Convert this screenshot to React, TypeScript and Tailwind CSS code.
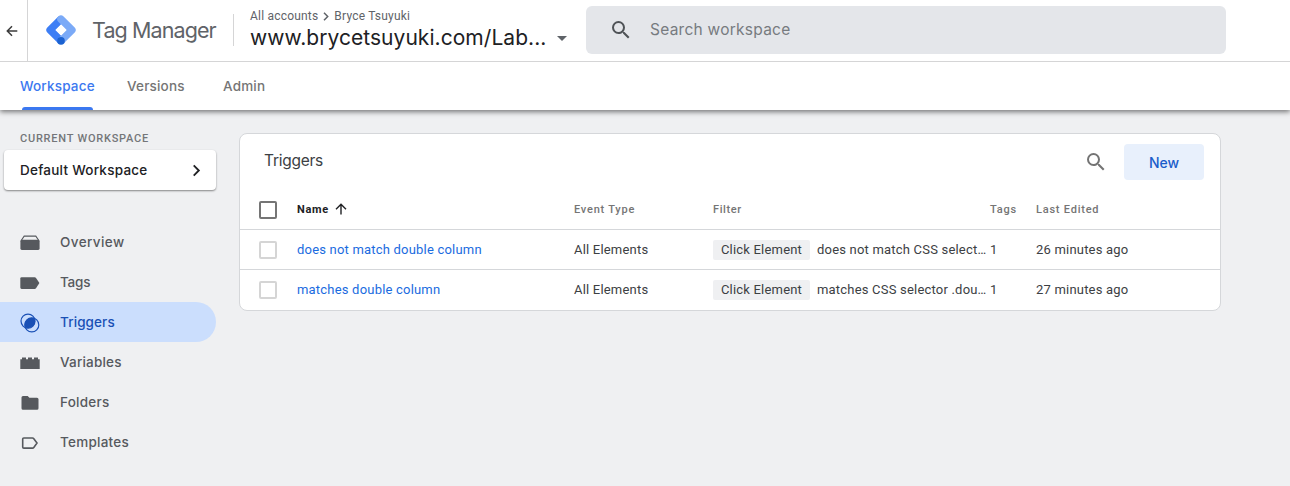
import React from "react";

const SearchIcon = ({ className }: { className: string }) => (
  <svg viewBox="0 0 24 24" className={className} fill="currentColor">
    <path d="M15.5 14h-.79l-.28-.27A6.471 6.471 0 0 0 16 9.5 6.5 6.5 0 1 0 9.5 16c1.61 0 3.09-.59 4.23-1.57l.27.28v.79l5 4.99L20.49 19l-4.99-5zm-6 0C7.01 14 5 11.99 5 9.5S7.01 5 9.5 5 14 7.01 14 9.5 11.99 14 9.5 14z" />
  </svg>
);

const Logo = () => (
  <svg viewBox="0 0 30 30" className="mb-px size-[30px] shrink-0">
    <path d="M12.6 1.3 L1.3 12.6 Q-1 15 1.3 17.4 L12.4 28.5 L17.6 23 L9.5 15 L17.7 6.8Z" fill="#3d7ef5" />
    <path d="M12.3 1.5 Q15 -1 17.6 1.5 L28.7 12.6 Q31 15 28.7 17.4 L17.6 28.4 L12.3 23.2 L20.5 15 L12.3 6.8 Q9.7 4.1 12.3 1.5Z" fill="#7baaf7" />
    <path d="M15 9.5 L20.5 15 L15 20.5 L9.5 15Z" fill="#fff" />
    <circle cx="15" cy="25.9" r="3.8" fill="#1b62d1" />
  </svg>
);

const icons: Record<string, React.ReactNode> = {
  Overview: (
    <>
      <path d="M1.2 8.5 4.2 4.1h11.6l3 4.4" fill="none" stroke="currentColor" strokeWidth="1.1" />
      <rect x="0.4" y="7.8" width="19.2" height="10.2" rx="1.4" />
    </>
  ),
  Tags: <path d="M1.6 5.3h13.1q.8 0 1.3.6L19.4 11.1 16 16.2q-.5.7-1.3.7H1.6q-1.3 0-1.3-1.3V6.6q0-1.3 1.3-1.3Z" />,
  Triggers: (
    <>
      <circle cx="8" cy="9.1" r="7" fill="none" stroke="currentColor" strokeWidth="1.2" />
      <circle cx="11.8" cy="12.9" r="7" fill="none" stroke="currentColor" strokeWidth="1.2" />
      <path d="M14.5 6.4A7 7 0 0 0 5.3 15.6 7 7 0 0 0 14.5 6.4Z" />
    </>
  ),
  Variables: <path d="M.3 7.2H2V5.4h4v1.8h2V5.4h4v1.8h2V5.4h4v1.8h1.7v9.9H.3Z" />,
  Folders: <path d="M3 4h4.7l1.7 1.8H17q1.5 0 1.5 1.5v9q0 1.5-1.5 1.5H3q-1.5 0-1.5-1.5V5.5Q1.5 4 3 4Z" />,
  Templates: (
    <path d="M3.8 6h8.7q.8 0 1.3.7l3.2 4.4-3.2 4.3q-.5.7-1.3.7H3.8q-1.1 0-1.1-1.1V7.1Q2.7 6 3.8 6Z" fill="none" stroke="currentColor" strokeWidth="1.6" />
  ),
};

const menu = [
  { name: "Overview", track: "tracking-[0.4px]" },
  { name: "Tags", track: "tracking-[-0.2px]" },
  { name: "Triggers", track: "tracking-[0.1px]" },
  { name: "Variables", track: "tracking-[0.2px]" },
  { name: "Folders", track: "tracking-[0.25px]" },
  { name: "Templates", track: "tracking-[0.25px]" },
];

const rows = [
  { name: "does not match double column", filter: "does not match CSS select…", edited: "26 minutes ago" },
  { name: "matches double column", filter: "matches CSS selector .dou…", edited: "27 minutes ago" },
];

const columns = "grid grid-cols-[57px_277px_139px_277px_46px_1fr] items-center";

export default function App() {
  return (
    <div className="flex h-[486px] w-[1290px] flex-col overflow-hidden bg-[#eff0f2] font-[Roboto,sans-serif] text-[#3c4043]">
      <header className="relative z-10 shrink-0 bg-white shadow-[0_2px_5px_rgba(0,0,0,0.5)]">
        <div className="flex h-[62px] border-b border-[#d5d5d6]">
          <div className="flex w-7 items-center border-r border-[#d5d5d6] pl-[6px]">
            <svg viewBox="0 0 12 12" className="size-3" fill="none" stroke="#3c3c3c" strokeWidth="1.5">
              <path d="M11.3 6H1.6M6 1.3 1.3 6 6 10.7" />
            </svg>
          </div>
          <div className="flex w-[206px] items-center pl-[18px]">
            <Logo />
            <span className="ml-[16px] whitespace-nowrap font-[Inter,sans-serif] text-[21.5px] tracking-[-0.9px] text-[#5f6368]">Tag Manager</span>
          </div>
          <div className="mt-[14px] h-8 w-px shrink-0 -translate-x-px bg-[#d5d5d6]" />
          <div className="w-[351px] pl-[15px] pt-[9px]">
            <div className="flex h-[14px] items-center text-[12px] tracking-[0.2px] text-[#5f6368]">
              All accounts
              <svg viewBox="0 0 6 9" className="mx-[5px] h-[9px] w-[6px]" fill="none" stroke="#5f6368" strokeWidth="1.5">
                <path d="m1 .8 3.7 3.7L1 8.2" />
              </svg>
              Bryce Tsuyuki
            </div>
            <div className="flex h-[30px] items-center text-[#202124]">
              <span className="w-[297px] whitespace-nowrap font-[Inter,sans-serif] text-[21px] tracking-[0.05px]">www.brycetsuyuki.com/Lab...</span>
              <svg viewBox="0 0 10 5" className="ml-[10px] h-[5px] w-[10px]" fill="#5f6368">
                <path d="M0 0h10L5 5Z" />
              </svg>
            </div>
          </div>
          <div className="mt-[6px] flex h-12 w-[640px] items-center rounded-[6px] bg-[#e4e6ea] pl-[23px]">
            <SearchIcon className="size-6 text-[#4f5357]" />
            <span className="ml-[17px] font-[Inter,sans-serif] text-[15.5px] tracking-[0.25px] text-[#777b7f]">Search workspace</span>
          </div>
        </div>
        <nav className="flex h-12 gap-8 pl-5 font-[Inter,sans-serif] text-[13.5px] font-medium tracking-[0.18px] text-[#757575]">
          <div className="flex w-[75px] flex-col text-[#3b78f0]">
            <span className="h-[45px] leading-[48px]">Workspace</span>
            <span className="mx-[2px] h-[3px] rounded-t-[3px] bg-[#3b78f0]" />
          </div>
          <span className="w-16 leading-[48px]">Versions</span>
          <span className="leading-[48px]">Admin</span>
        </nav>
      </header>

      <div className="flex min-h-0 flex-1">
        <aside className="w-[239px] shrink-0">
          <div className="pl-5 pt-[22px] text-[11px] font-medium leading-[14px] tracking-[0.77px] text-[#747679]">CURRENT WORKSPACE</div>
          <button className="ml-1 mt-[4px] flex h-10 w-[212px] items-center justify-between rounded-[4px] bg-white pl-4 pr-[15px] font-[Inter,sans-serif] text-[13.5px] font-medium tracking-[0.25px] text-[#202124] shadow-[0_1px_2px_rgba(0,0,0,0.45)]">
            Default Workspace
            <svg viewBox="0 0 9 14" className="h-[13px] w-[9px]" fill="none" stroke="currentColor" strokeWidth="2">
              <path d="m1.5 1.5 5.5 5.5-5.5 5.5" />
            </svg>
          </button>
          <ul className="mt-8 font-[Inter,sans-serif] text-[13.5px] font-medium">
            {menu.map((item) => (
              <li
                key={item.name}
                className={
                  item.name === "Triggers"
                    ? "flex h-10 w-[216px] items-center rounded-r-full bg-[#cbdefd] pl-5 text-[#1a50b5]"
                    : "flex h-10 w-[216px] items-center pl-5 text-[#56595e]"
                }
              >
                <svg viewBox="0 0 20 20" className="size-5 overflow-visible" fill="currentColor">
                  {icons[item.name]}
                </svg>
                <span className={`ml-5 ${item.track}`}>{item.name}</span>
              </li>
            ))}
          </ul>
        </aside>

        <main className="mt-[23px] h-[178px] w-[982px] rounded-[8px] border border-[#d5d7da] bg-white">
          <div className="flex h-[56px] items-center pl-6 pr-4">
            <h1 className="flex-1 pb-[2px] font-[Inter,sans-serif] text-[15.5px] tracking-[-0.25px] text-[#3c4043]">Triggers</h1>
            <SearchIcon className="mr-4 size-6 text-[#747474]" />
            <button className="h-9 w-20 rounded-[4px] bg-[#e8f0fc] font-[Inter,sans-serif] text-[14px] font-medium text-[#1a5dca]">New</button>
          </div>
          <div className={`${columns} h-10 border-b border-[#d5d7da] text-[11px] font-medium leading-4 tracking-[0.77px] text-[#757575]`}>
            <span className="ml-[19px] size-[18px] rounded-[2px] border-2 border-[#757575]" />
            <span className="flex items-center pt-px font-bold tracking-[0.7px] text-[#202124]">
              Name
              <svg viewBox="0 0 12 12" className="mb-[2px] ml-[6px] size-3" fill="none" stroke="currentColor" strokeWidth="1.4">
                <path d="M6 11.5V1.3M1 6.3l5-5 5 5" />
              </svg>
            </span>
            <span className="pt-px">Event Type</span>
            <span className="pt-px tracking-[0.6px]">Filter</span>
            <span className="pt-px">Tags</span>
            <span className="pt-px">Last Edited</span>
          </div>
          {rows.map((row, i) => (
            <div
              key={row.name}
              className={`${columns} h-10 text-[13px] tracking-[0.2px] ${i === 0 ? "border-b border-[#d5d7da]" : ""}`}
            >
              <span className="ml-[19px] size-[18px] rounded-[2px] border-2 border-[#d5d5d5]" />
              <a className="text-[#1a6be0]">{row.name}</a>
              <span>All Elements</span>
              <span className="flex items-center">
                <span className="mr-[7px] h-5 w-[97px] shrink-0 rounded-[2px] bg-[#eff0f2] text-center leading-5">Click Element</span>
                <span className="whitespace-nowrap">{row.filter}</span>
              </span>
              <span>1</span>
              <span>{row.edited}</span>
            </div>
          ))}
        </main>
      </div>
    </div>
  );
}
